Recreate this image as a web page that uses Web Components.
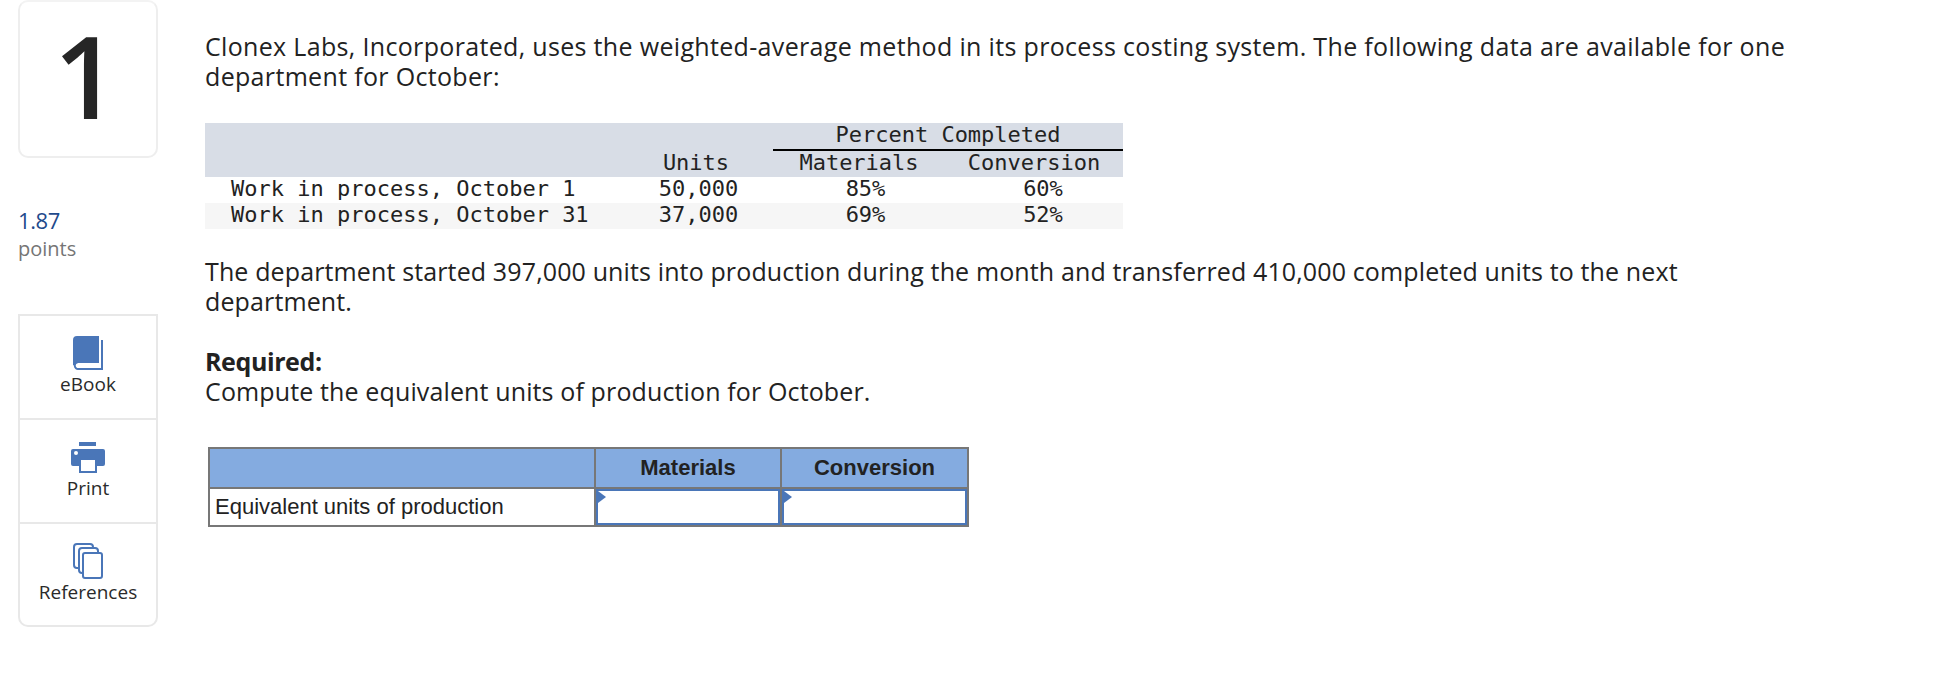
<!DOCTYPE html>
<html><head><meta charset="utf-8"><style>
html,body{margin:0;background:#fff}
body{font-family:"Open Sans","Liberation Sans",sans-serif;color:#222}
</style></head><body>
<question-page>
  <side-rail slot="rail"></side-rail>
  <question-body></question-body>
</question-page>
<script>
function def(name, html){
  customElements.define(name, class extends HTMLElement{
    constructor(){super();this.attachShadow({mode:"open"}).innerHTML=html;}
  });
}
def("question-page",`<style>:host{display:flex;width:1944px;height:696px;overflow:hidden;box-sizing:border-box;padding-left:18px;gap:47px}</style><slot name="rail"></slot><slot></slot>`);
def("number-card",`<style>:host{display:flex;justify-content:center;align-items:center;box-sizing:border-box;width:140px;height:158px;border:2px solid #eee;border-top-color:#f3f3f3;border-radius:10px;font:600 114px/1 "Open Sans",sans-serif;color:#262626;padding:0 4px 8px 0}</style><span>1</span>`);
def("points-label",`<style>:host{display:block;margin-top:47px;font-family:"Open Sans",sans-serif}
.v{color:#1f4a8c;font-size:22px;line-height:30px;letter-spacing:-.4px}.p{color:#757575;font-size:20px;line-height:26px;padding-top:1px}</style><div class="v">1.87</div><div class="p">points</div>`);
def("tool-card",`<style>:host{display:flex;flex-direction:column;align-items:center;box-sizing:border-box;height:104px;border:2px solid #e8e8e8;border-bottom:0;padding-top:19px;font:19px/24px "Open Sans",sans-serif;color:#2a2a2a}
:host([last]){height:105px;border-bottom:2px solid #e8e8e8;border-radius:0 0 10px 10px}
.i{height:36px;display:flex;align-items:flex-end;margin-bottom:1px}</style><div class="i"><slot name="icon"></slot></div><slot></slot>`);
def("side-rail",`<style>:host{display:block;width:140px;flex:none}.tools{margin-top:52px}svg{display:block}</style>
<number-card></number-card><points-label></points-label>
<div class="tools">
<tool-card><svg slot="icon" width="30" height="34" viewBox="0 0 30 34" style="margin:0 1px 1px 0;display:block"><path fill="#4a76b8" d="M4 0h22v27H5a3.5 3.5 0 0 0-3.5 2.5L0 29V4a4 4 0 0 1 4-4z"/><path fill="none" stroke="#4a76b8" stroke-width="2" d="M29 4v29H5.5a3.5 3.5 0 0 1-.5-7"/></svg>eBook</tool-card>
<tool-card><svg slot="icon" width="36" height="34" viewBox="0 0 36 34"><rect x="9" y="1" width="17" height="4" fill="#4a76b8"/><path fill="#4a76b8" d="M3 8h30a2 2 0 0 1 2 2v13a2 2 0 0 1-2 2h-6v-8H9v8H3a2 2 0 0 1-2-2V10a2 2 0 0 1 2-2z"/><circle cx="6" cy="12" r="2" fill="#fff"/><rect x="10" y="18" width="16" height="13" fill="#fff" stroke="#4a76b8" stroke-width="2"/></svg>Print</tool-card>
<tool-card last><svg slot="icon" width="32" height="36" viewBox="0 0 32 36"><g fill="#fff" stroke="#4a76b8" stroke-width="2"><rect x="2" y="1" width="19" height="24" rx="3"/><rect x="7" y="5" width="19" height="25" rx="3"/><rect x="11" y="10" width="19" height="25" rx="2"/></g></svg>References</tool-card>
</div>`);
def("cost-table",`<style>:host{display:block;width:918px;font:22px/22px "DejaVu Sans Mono",monospace;letter-spacing:0;color:#222;margin:32px 0 27px}
table{border-collapse:separate;border-spacing:0;table-layout:fixed;width:918px}td{padding:0 0 2px;box-sizing:border-box;text-align:center;white-space:nowrap;height:26px}
.h td{background:#d8dde6}.h1 td{height:28px}.l{text-align:left;padding-left:26px}
.u{border-bottom:2px solid #000}.a td{background:#fff}.b td{background:#f6f6f6}
td.n{padding-left:5px}td.m{padding-left:15px}td.c{padding-left:20px}td.hm{padding-left:2px}td.hc{padding-left:2px}</style>
<table><colgroup><col style="width:435px"><col style="width:112px"><col style="width:21px"><col style="width:170px"><col style="width:180px"></colgroup>
<tr class="h h1"><td></td><td></td><td></td><td colspan="2" class="u">Percent Completed</td></tr>
<tr class="h"><td></td><td>Units</td><td></td><td class="hm">Materials</td><td class="hc">Conversion</td></tr>
<tr class="a"><td class="l">Work in process, October 1</td><td class="n">50,000</td><td></td><td class="m">85%</td><td class="c">60%</td></tr>
<tr class="b"><td class="l">Work in process, October 31</td><td class="n">37,000</td><td></td><td class="m">69%</td><td class="c">52%</td></tr></table>`);
def("answer-cell",`<style>:host{display:block;position:relative;box-sizing:border-box;height:36px;border:2px solid #4a76b8;background:#fff}
.t{position:absolute;left:0;top:0;width:0;height:0;border-left:8px solid #4a76b8;border-top:6px solid transparent;border-bottom:6px solid transparent}</style><div class="t"></div>`);
def("answer-table",`<style>:host{display:block;width:759px;margin:41px 0 0 3px;font:22px/1.2 "Liberation Sans",Arial,sans-serif;letter-spacing:0;color:#222}
table{border-collapse:collapse;table-layout:fixed;width:759px;border:2px solid #777}
td{border:2px solid #777;padding:0}.h td{background:#84abe0;height:38px;text-align:center;font-weight:700}.l{padding-left:5px;height:36px}.c{padding:0}</style>
<table><colgroup><col style="width:386px"><col style="width:186px"><col style="width:187px"></colgroup>
<tr class="h"><td></td><td>Materials</td><td>Conversion</td></tr>
<tr><td class="l">Equivalent units of production</td><td class="c"><answer-cell></answer-cell></td><td class="c"><answer-cell></answer-cell></td></tr></table>`);
def("question-body",`<style>:host{display:block;width:1600px;padding-top:31px;font:25px/30px "Open Sans",sans-serif;letter-spacing:.13px;color:#222}p{margin:0}p.f{letter-spacing:.33px}b{font-weight:700;letter-spacing:-.4px}.r{margin-top:30px}</style>
<p class="f">Clonex Labs, Incorporated, uses the weighted-average method in its process costing system. The following data are available for one department for October:</p>
<cost-table></cost-table>
<p>The department started 397,000 units into production during the month and transferred 410,000 completed units to the next department.</p>
<p class="r"><b>Required:</b><br>Compute the equivalent units of production for October.</p>
<answer-table></answer-table>`);
</script>
</body></html>
